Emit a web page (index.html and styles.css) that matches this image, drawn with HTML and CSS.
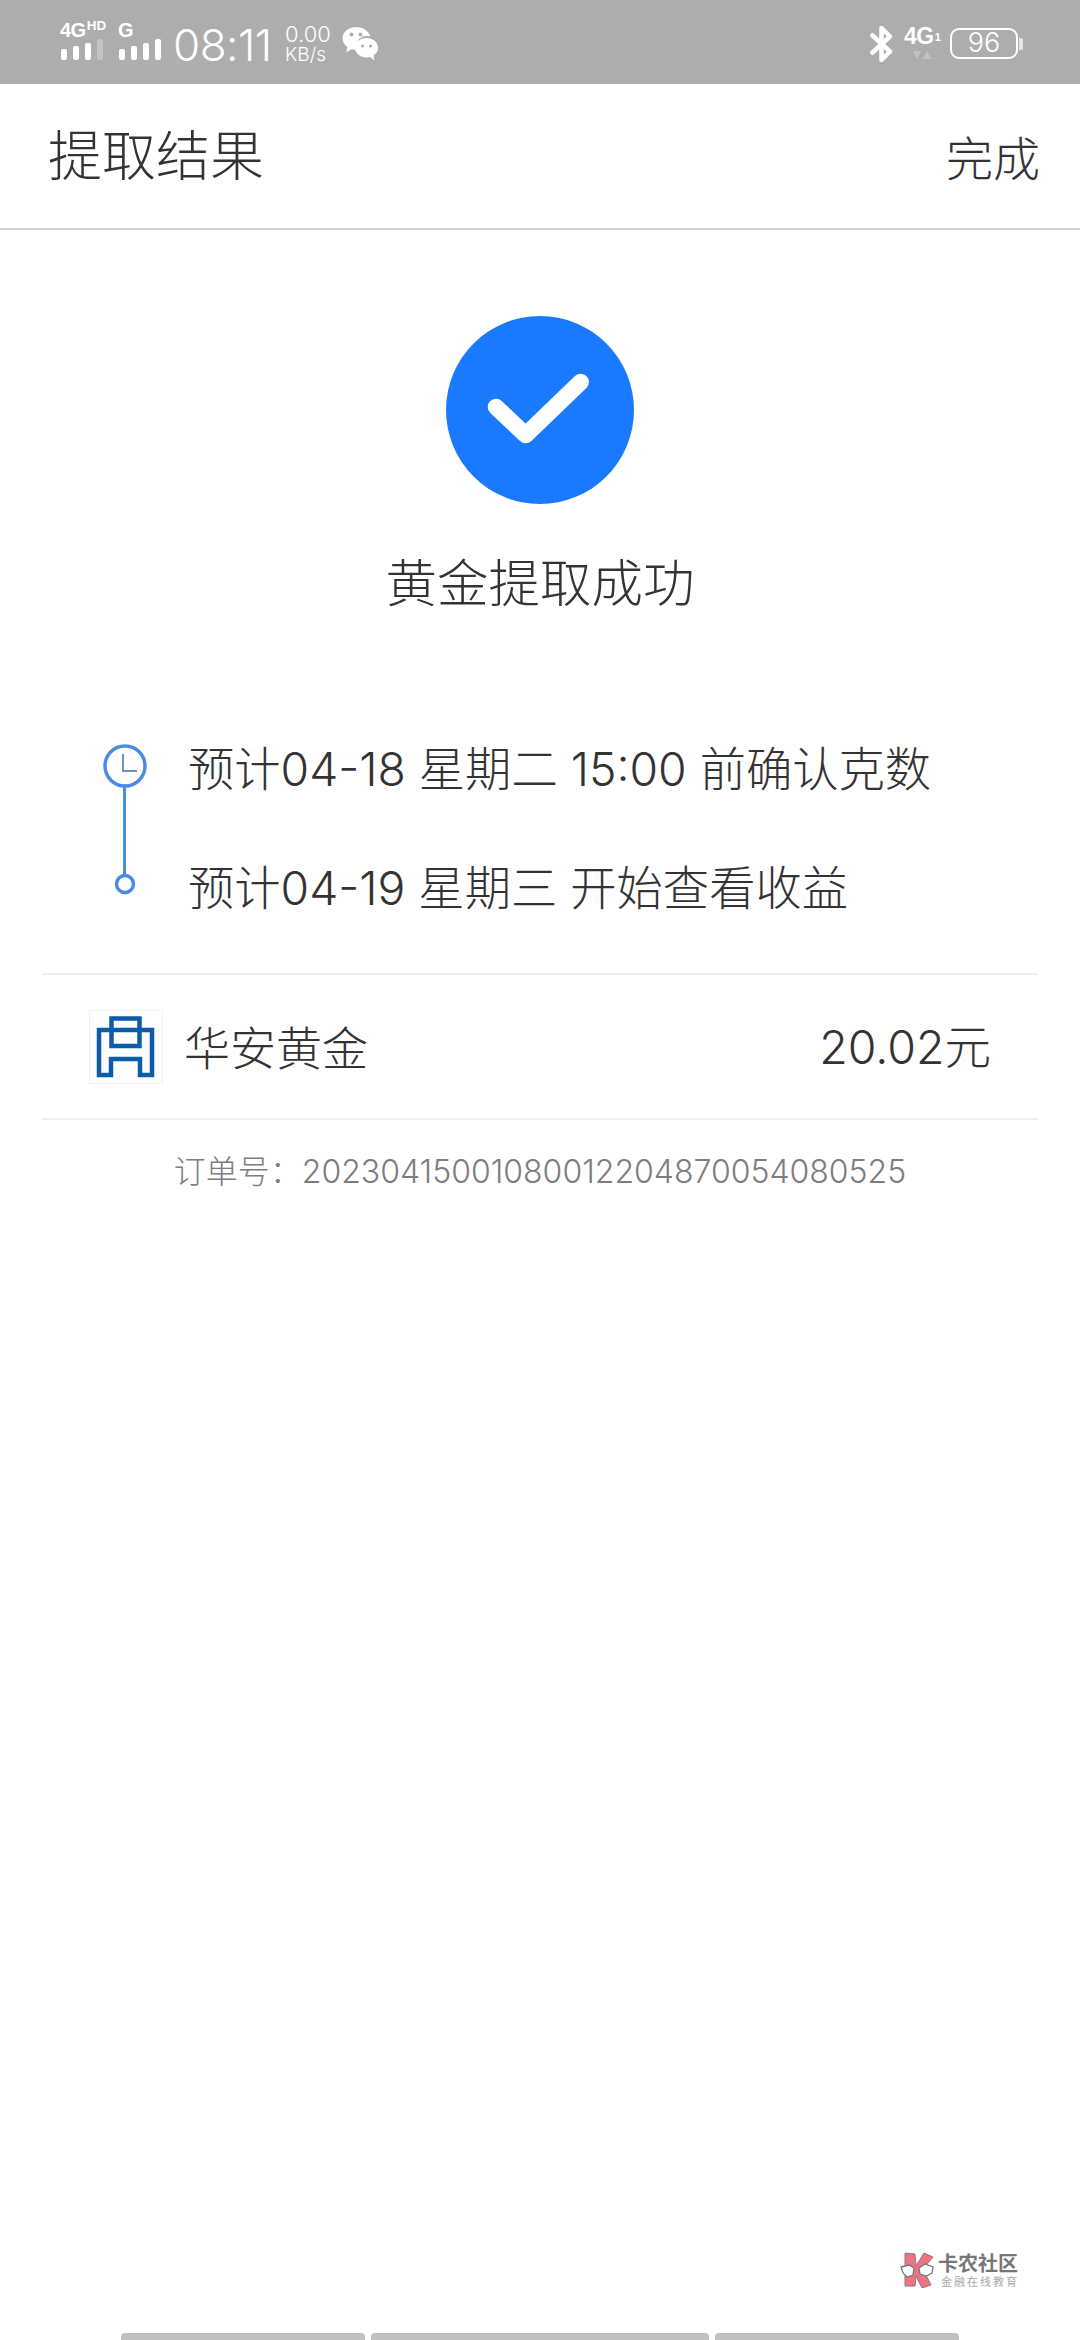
FILE: index.html
```html
<!DOCTYPE html>
<html lang="zh-CN">
<head>
<meta charset="utf-8">
<title>提取结果</title>
<link rel="stylesheet" href="styles.css">
</head>
<body>
<div class="page">
  <header class="status">
    <div class="signal">
      <div class="net"><span class="net-main">4G</span><span class="net-sup">HD</span></div>
      <svg class="bars" width="44" height="22" viewBox="0 0 44 22"><rect x="1" y="11" width="6" height="11" rx="2" fill="#fff"/><rect x="13" y="8" width="6" height="14" rx="2" fill="#fff"/><rect x="25" y="5" width="6" height="17" rx="2" fill="#fff"/><rect x="37" y="1" width="6" height="21" rx="2" fill="#c4c4c4"/></svg>
    </div>
    <div class="signal second">
      <div class="net"><span class="net-main">G</span></div>
      <svg class="bars" width="44" height="22" viewBox="0 0 44 22"><rect x="1" y="11" width="6" height="11" rx="2" fill="#fff"/><rect x="13" y="8" width="6" height="14" rx="2" fill="#fff"/><rect x="25" y="5" width="6" height="17" rx="2" fill="#fff"/><rect x="37" y="1" width="6" height="21" rx="2" fill="#fff"/></svg>
    </div>
    <div class="clock">08:11</div>
    <div class="speed"><span>0.00</span><span class="unit">KB/s</span></div>
    <svg class="wechat" width="36" height="36" viewBox="0 0 36 36">
      <path d="M14 1C6.500 1 .5 6 .5 12.300c0 3.600 2 6.700 5 8.800L4 26.500l5.600-3.200c1.300.4 2.900.6 4.400.6h1a10.500 10.500 0 0 1 13.500-13.500C26.800 5 21 1 14 1z" fill="#fff"/>
      <path d="M24.500 12C18 12 13 16.300 13 21.700s5 9.700 11.500 9.700c1.300 0 2.500-.2 3.600-.5l4.400 3.600-1-5c2.800-1.800 4.500-4.600 4.500-7.800 0-5.400-5-9.700-11.500-9.700z" fill="#fff"/>
      <circle cx="9.500" cy="8.500" r="1.900" fill="#adadad"/><circle cx="18.500" cy="8.500" r="1.900" fill="#adadad"/>
      <circle cx="20.500" cy="20" r="1.600" fill="#adadad"/><circle cx="28.500" cy="20" r="1.600" fill="#adadad"/>
    </svg>
    <div class="status-right">
      <svg class="bt" width="26" height="38" viewBox="0 0 26 38"><path d="M3.500 10.500 21 26.500 12.500 35V3L21 11.500 3.500 27.500" fill="none" stroke="#fff" stroke-width="4.500" stroke-linecap="round" stroke-linejoin="round"/></svg>
      <div class="sim2">
        <div class="sim2-top"><span class="sim2-net">4G</span><span class="sim2-num">1</span></div>
        <svg class="arrows" width="20" height="10" viewBox="0 0 20 10"><path d="M1 1h8L5 9z" fill="#c2c2c2"/><path d="M15 1l4.500 8h-9z" fill="#c2c2c2"/></svg>
      </div>
      <div class="battery"><div class="battery-body">96</div><div class="battery-nub"></div></div>
    </div>
  </header>

  <nav class="topbar">
    <h1 class="topbar-title">提取结果</h1>
    <span class="topbar-done">完成</span>
  </nav>

  <main class="content">
    <div class="result">
      <svg class="check" width="188" height="188" viewBox="0 0 188 188"><circle cx="94" cy="94" r="94" fill="#1a7aff"/><path d="M50 91 79.700 119 134.700 66" fill="none" stroke="#fff" stroke-width="16.500" stroke-linecap="round" stroke-linejoin="round"/></svg>
      <div class="result-text">黄金提取成功</div>
    </div>

    <div class="timeline">
      <div class="timeline-rail">
        <svg width="44" height="152" viewBox="0 0 44 152"><circle cx="22" cy="22" r="20" fill="none" stroke="#4a8be6" stroke-width="3.500"/><path d="M20 10V27H34" fill="none" stroke="#6b93c9" stroke-width="2"/><path d="M21.500 43V132" stroke="#4a8be6" stroke-width="3"/><circle cx="22" cy="140" r="8.500" fill="none" stroke="#4a8be6" stroke-width="3.500"/></svg>
      </div>
      <div class="timeline-lines">
        <div>预计04-18 星期二 15:00 前确认克数</div>
        <div>预计04-19 星期三 开始查看收益</div>
      </div>
    </div>

    <div class="fund">
      <svg class="fund-logo" width="74" height="74" viewBox="0 0 74 74"><rect x=".5" y=".5" width="73" height="73" fill="#fff" stroke="#f1f1f1"/><path d="M10 20H63V65H51V49H22V65H10Z M22.500 8.500H50.500V36H22.500Z" fill="none" stroke="#0c5ba6" stroke-width="4.500"/></svg>
      <span class="fund-name">华安黄金</span>
      <span class="fund-amount">20.02元</span>
    </div>

    <div class="order">订单号：20230415001080012204870054080525</div>
  </main>

  <div class="watermark">
    <svg width="34" height="36" viewBox="0 0 34 36">
      <path d="M5 1 15 2 16 14 24 1 33 5 23 17 31 33 22 36 16 24 15 34 5 34Z" fill="#f07283" stroke="#8a7a7c" stroke-width="1"/>
      <path d="M1 15 9 13 14 16 13 23 7 25 3 21Z M19 16 25 12 33 15 32 21 26 24 20 22Z" fill="#fff" stroke="#777" stroke-width="1.300"/>
    </svg>
    <div class="watermark-text">
      <span class="watermark-name">卡农社区</span>
      <span class="watermark-sub">金融在线教育</span>
    </div>
  </div>

  <footer class="softkeys">
    <div class="softkey key-a"></div>
    <div class="softkey key-b"></div>
    <div class="softkey key-c"></div>
  </footer>
</div>
</body>
</html>
```

FILE: styles.css
```css
* { box-sizing: border-box; margin: 0; padding: 0; }
html, body { background: #fff; }
body { width: 1080px; height: 2340px; overflow: hidden; font-family: Inter, "Noto Sans CJK SC", sans-serif; color: #333; }
.page { position: relative; width: 1080px; height: 2340px; display: flex; flex-direction: column; }

.status { height: 84px; background: #adadad; color: #fff; display: flex; align-items: flex-start; padding-left: 60px; flex: none; }
.signal { display: flex; flex-direction: column; width: 46px; margin-top: 20px; }
.signal.second { margin-left: 12px; }
.net { height: 18px; display: flex; align-items: flex-start; line-height: 18px; }
.net-main { font: 700 20px/20px "Liberation Sans", sans-serif; letter-spacing: -.5px; }
.net-sup { font: 700 13.500px/12px "Liberation Sans", sans-serif; margin-left: 1px; }
.bars { display: block; }
.clock { font: 300 44px/44px Inter, sans-serif; margin: 23px 0 0 9px; width: 112px; letter-spacing: -.5px; white-space: nowrap; }
.speed { display: flex; flex-direction: column; font: 300 22px/22px Inter, sans-serif; margin-top: 23px; width: 57px; }
.unit { font-size: 19px; line-height: 20px; }
.wechat { margin-top: 26px; }
.status-right { margin-left: auto; display: flex; align-items: flex-start; padding-right: 57px; }
.bt { margin-top: 25px; }
.sim2 { margin: 25px 0 0 9px; display: flex; flex-direction: column; align-items: flex-start; width: 46px; }
.sim2-top { display: flex; align-items: flex-end; height: 22px; }
.sim2-net { font: 700 23px/22px "Liberation Sans", sans-serif; letter-spacing: -.5px; }
.sim2-num { font: 700 11px/12px "Liberation Sans", sans-serif; margin: 0 0 4px 1px; }
.arrows { margin: 3px 0 0 8px; }
.battery { display: flex; align-items: center; margin-top: 28px; }
.battery-body { width: 68px; height: 31px; border: 2.500px solid #fff; border-radius: 9px; text-align: center; font: 300 27px/26px Inter, sans-serif; }
.battery-nub { width: 4px; height: 12px; background: #e6e6e6; border-radius: 0 2px 2px 0; margin-left: 1px; }

.topbar { height: 146px; flex: none; display: flex; justify-content: space-between; align-items: center; padding: 0 40px 0 48px; border-bottom: 2px solid #cfcfcf; background: #fff; }
.topbar-title { font: 300 54px/60px "Noto Sans CJK SC", sans-serif; margin-top: -7px; color: #333; }
.topbar-done { font: 300 47px/60px "Noto Sans CJK SC", sans-serif; color: #333; }

.content { flex: 1; display: flex; flex-direction: column; }
.result { display: flex; flex-direction: column; align-items: center; padding-top: 86px; }
.check { display: block; }
.result-text { font: 300 51.500px/60px "Noto Sans CJK SC", sans-serif; margin-top: 46px; }
.timeline { display: flex; margin: 134px 0 0 103px; height: 160px; }
.timeline-rail { width: 85px; flex: none; }
.timeline-rail svg { display: block; }
.timeline-lines { display: flex; flex-direction: column; gap: 59px; font-size: 46.300px; line-height: 60px; white-space: nowrap; margin-top: -5px; font-weight: 300; }
.fund { margin: 69px 42px 0; height: 147px; border-top: 2px solid #efefef; border-bottom: 2px solid #efefef; display: flex; align-items: center; padding: 0 47px; }
.fund-name { font: 300 46px/60px "Noto Sans CJK SC", sans-serif; margin: -4px 0 0 21px; }
.fund-amount { margin-left: auto; font-size: 46.500px; font-weight: 300; line-height: 60px; }
.order { margin-top: 29px; text-align: center; font-size: 32px; line-height: 46px; font-weight: 300; color: #7d7d7d; }

.watermark { position: absolute; left: 900px; top: 2252px; display: flex; gap: 4px; }
.watermark-text { display: flex; flex-direction: column; align-items: flex-start; }
.watermark-name { font: 700 20px/22px "Noto Sans CJK SC", sans-serif; color: #777; }
.watermark-sub { font: 400 11px/14px "Noto Sans CJK SC", sans-serif; color: #aaa; letter-spacing: 2px; margin-left: 3px; }

.softkeys { flex: none; height: 7px; display: flex; padding-left: 121px; gap: 6px; }
.softkey { background: #c0c0c0; border-radius: 4px 4px 0 0; height: 7px; }
.key-a { width: 244px; }
.key-b { width: 338px; }
.key-c { width: 244px; }
```
